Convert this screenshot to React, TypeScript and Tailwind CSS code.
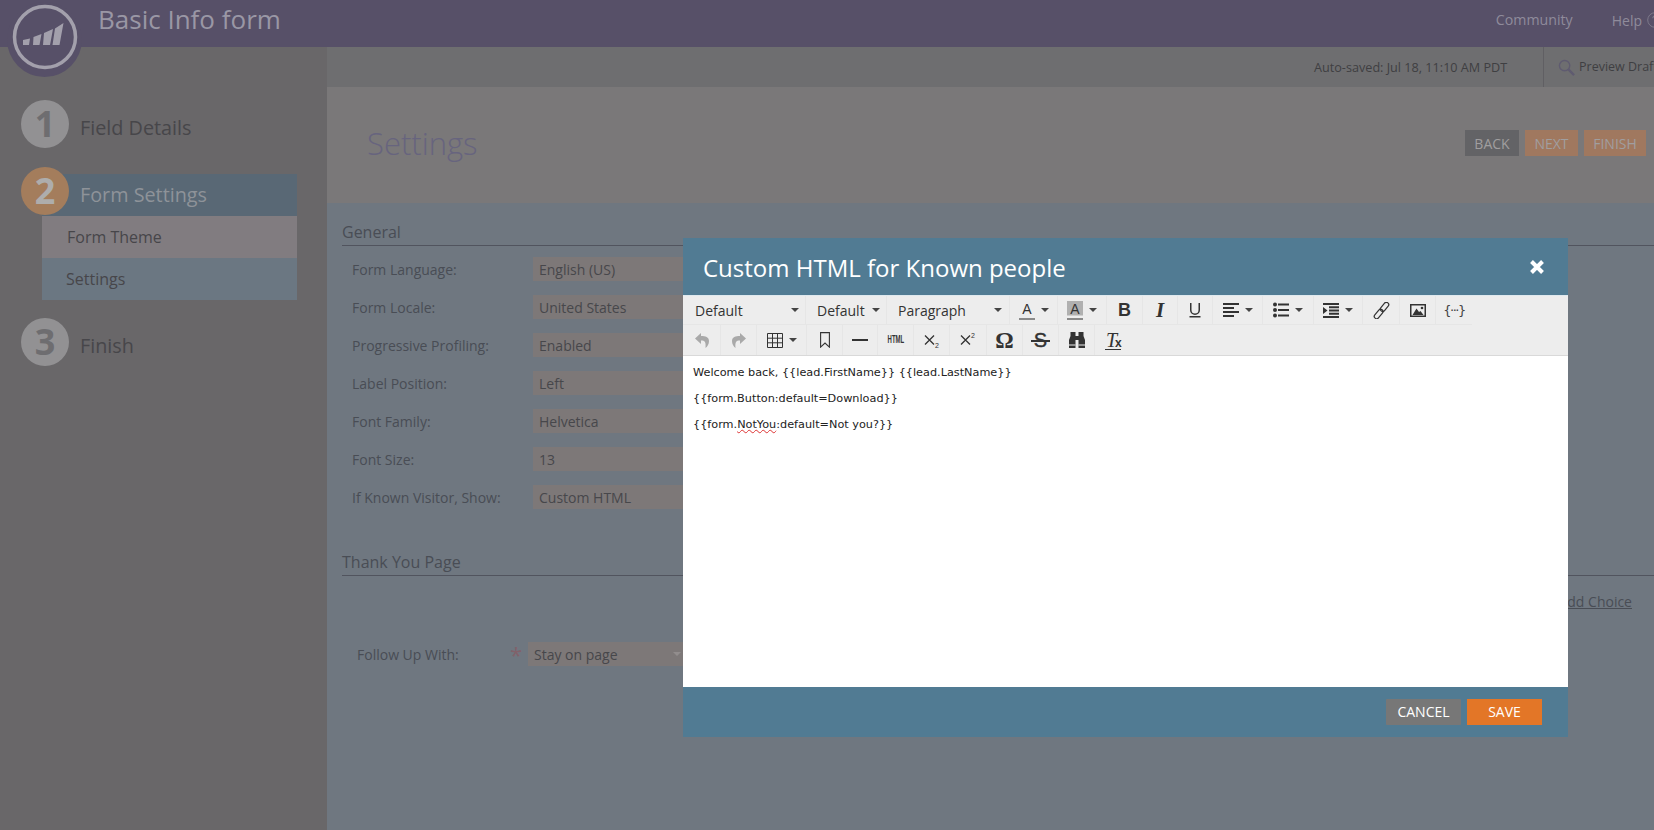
import React from "react";

const F = { fontFamily: '"Open Sans", sans-serif' };
const SANS = { fontFamily: '"Liberation Sans", sans-serif' };
const SERIF = { fontFamily: '"Liberation Serif", serif' };

function Caret({ c = "#444" }: { c?: string }) {
  return <span className="inline-block w-0 h-0 border-l-[4px] border-r-[4px] border-t-[4px] border-l-transparent border-r-transparent" style={{ borderTopColor: c }} />;
}

function Logo() {
  return (
    <svg width="66" height="66" viewBox="0 0 66 66" className="block">
      <circle cx="33" cy="33" r="30.5" fill="none" stroke="#a3a0ac" strokeWidth="3.500" />
      <path d="M11 36l7-1.500-1 6.500h-6z M21.500 33l8-3-2 11h-6.500z M32 29l9-4-3 16h-7z M43 24.500l8.500-5.500-4 22h-7z" fill="#a3a0ac" />
    </svg>
  );
}

function Step({ n, label, active }: { n: string; label: string; active?: boolean }) {
  return (
    <div className={`flex items-center h-[42px] relative ml-[42px] ${active ? "bg-[#596875] w-[255px]" : ""}`}>
      <div className={`absolute left-[-21px] top-[-7px] w-[48px] h-[48px] rounded-full flex items-center justify-center text-[36px] font-bold ${active ? "bg-[#a47d5c] text-[#aeadac]" : "bg-[#929193] text-[#6e6d70]"}`}>{n}</div>
      <span className={`ml-[38px] text-[19.800px] ${active ? "text-[#8e9399]" : "text-[#47464a]"}`}>{label}</span>
    </div>
  );
}

function Row({ label, value }: { label: string; value: string }) {
  return (
    <div className="flex items-center h-[24px] mb-[14px]">
      <span className="w-[191px] pl-[10px] text-[14px] text-[#494d55] shrink-0">{label}</span>
      <span className="flex-1 h-[24px] bg-[#7d7878] text-[14px] text-[#47474b] pl-[6px] leading-[25px]">{value}</span>
    </div>
  );
}

function Btn({ children, w, gap = 6 }: { children: React.ReactNode; w: number; gap?: number }) {
  return (
    <div className="flex items-center justify-center h-full shrink-0 text-[#333] border-r border-[#e6e6e6] last:border-r-0" style={{ width: w, gap }}>
      {children}
    </div>
  );
}

function Sel({ label, w, pad, gap }: { label: string; w: number; pad: number; gap: number }) {
  return (
    <div className="flex items-center h-full shrink-0 border-r border-[#e6e6e6] text-[14px] text-[#333]" style={{ width: w, paddingLeft: pad }}>
      <span style={{ width: gap }} className="shrink-0">{label}</span>
      <Caret />
    </div>
  );
}

function ColorA({ bg }: { bg?: boolean }) {
  return (
    <svg width="16" height="19" viewBox="0 0 16 19" className="block">
      {bg && <rect x="0" y="0" width="16" height="14.500" fill="#b0b0b0" />}
      <text x="8" y="13" textAnchor="middle" fontSize="14" fill="#333" style={SANS}>A</text>
      <rect x="0" y="17" width="16" height="2" fill="#8a8a8a" />
    </svg>
  );
}

function XScript({ up }: { up?: boolean }) {
  return (
    <svg width="16" height="16" viewBox="0 0 16 16" className="block" fill="none" stroke="#333">
      <path d="M1 3.500l9 9M10 3.500l-9 9" strokeWidth="1.300" />
      {up ? <text x="11" y="6" fontSize="7" fill="#333" stroke="none" style={SANS}>2</text> : <text x="11" y="16" fontSize="7" fill="#333" stroke="none" style={SANS}>2</text>}
    </svg>
  );
}

export default function App() {
  return (
    <div className="relative w-[1654px] h-[830px] overflow-hidden flex flex-col bg-[#6f7780]" style={F}>
      <header className="h-[47px] bg-[#575068] flex items-center shrink-0">
        <span className="ml-[98px] text-[26px] text-[#9a97a5] mt-[-9px]">Basic Info form</span>
        <span className="ml-auto text-[14.200px] text-[#8f8b9b] mt-[-7px]">Community</span>
        <span className="ml-[39px] text-[14px] text-[#8f8b9b] mt-[-7px]">Help</span>
        <svg width="16" height="16" viewBox="0 0 16 16" className="ml-[5px] mr-[-9px] shrink-0 mt-[-7px]" fill="none" stroke="#7c7889"><circle cx="8" cy="8" r="7.300" /><path d="M5.800 6.300a2.200 2.200 0 114 1.200c-.8.700-1.800 1-1.800 2.200M8 11v1.500" strokeWidth="1.200" /></svg>
      </header>
      <div className="flex-1 flex min-h-0">
        <aside className="w-[327px] shrink-0 bg-[#696769] relative pt-[60px]">
          <div className="absolute left-[7px] top-[-45px] w-[75px] h-[75px] rounded-full bg-[#575068] flex items-start justify-center pt-[2px]"><Logo /></div>
          <Step n="1" label="Field Details" />
          <div className="h-[25px]" />
          <Step n="2" label="Form Settings" active />
          <div className="ml-[42px] w-[255px] h-[42px] bg-[#817c80] text-[16px] text-[#47464a] flex items-center pl-[25px]">Form Theme</div>
          <div className="ml-[42px] w-[255px] h-[42px] bg-[#6b7782] text-[16px] text-[#47464a] flex items-center pl-[24px]">Settings</div>
          <div className="h-[25px]" />
          <Step n="3" label="Finish" />
        </aside>
        <main className="flex-1 min-w-0 flex flex-col">
          <div className="h-[40px] bg-[#6e6e70] flex items-center shrink-0 text-[12.650px] text-[#3f3f42] whitespace-nowrap">
            <span className="ml-[987px] w-[193px] shrink-0">Auto-saved: Jul 18, 11:10 AM PDT</span>
            <span className="ml-[36px] h-full border-l border-[#605f63]" />
            <svg width="17" height="17" viewBox="0 0 18 18" className="ml-[14px] mr-[4px] shrink-0" fill="none" stroke="#5f5b70" strokeWidth="1.500"><circle cx="7" cy="7" r="5.500" /><path d="M11 11l6 6" strokeWidth="2.500" /></svg>
            <span className="text-[12.500px]">Preview Draft</span>
          </div>
          <div className="h-[116px] bg-[#7a7879] flex items-center shrink-0">
            <span className="ml-[40px] text-[31px] text-[#67647e] font-light mt-[-3px]">Settings</span>
            <div className="ml-auto mr-[8px] mt-[-4px] flex gap-[6px] text-[14px] text-[#a09e9f]">
              <span className="w-[54px] h-[26px] bg-[#636366] flex items-center justify-center">BACK</span>
              <span className="w-[53px] h-[26px] bg-[#a0785f] flex items-center justify-center">NEXT</span>
              <span className="w-[62px] h-[26px] bg-[#a0785f] flex items-center justify-center">FINISH</span>
            </div>
          </div>
          <div className="flex-1 pl-[15px] pt-[18px] min-h-0">
            <h2 className="text-[16px] text-[#494d55] border-b border-[#51545e] h-[25px] leading-[22px] font-normal">General</h2>
            <div className="w-[346px] pt-[11px]">
              <Row label="Form Language:" value="English (US)" />
              <Row label="Form Locale:" value="United States" />
              <Row label="Progressive Profiling:" value="Enabled" />
              <Row label="Label Position:" value="Left" />
              <Row label="Font Family:" value="Helvetica" />
              <Row label="Font Size:" value="13" />
              <Row label="If Known Visitor, Show:" value="Custom HTML" />
            </div>
            <h2 className="mt-[42px] text-[16px] text-[#494d55] border-b border-[#51545e] h-[25px] leading-[22px] font-normal">Thank You Page</h2>
            <div className="flex justify-end h-[28px] mt-[15px] pr-[22px] text-[14px] text-[#494d55] underline">Add Choice</div>
            <div className="flex items-center mt-[23px] h-[24px] w-[346px]">
              <span className="w-[162px] pl-[15px] text-[14px] text-[#494d55] shrink-0">Follow Up With:</span>
              <span className="w-[24px] text-[22px] text-[#81616a] leading-[24px] pl-[6px] shrink-0">*</span>
              <span className="flex-1 flex items-center justify-between h-[24px] bg-[#7d7878] text-[14px] text-[#47474b] pl-[6px] pr-[7px]">Stay on page <Caret c="#928d8d" /></span>
            </div>
          </div>
        </main>
      </div>

      <div className="absolute left-[683px] top-[238px] w-[885px] h-[499px] bg-[#517b93] flex flex-col">
        <div className="h-[57px] flex items-center justify-between shrink-0">
          <span className="ml-[20px] mt-[2px] text-[24px] text-white">Custom HTML for Known people</span>
          <svg width="16" height="16" viewBox="0 0 16 16" className="mr-[23px]"><path d="M2.500 2.500l11 11M13.500 2.500l-11 11" stroke="#fff" strokeWidth="4" /></svg>
        </div>
        <div className="h-[61px] bg-[#ededed] border-b border-[#d9d9d9] border-t border-t-[#dfe9ee] shrink-0">
          <div className="flex h-[29px] w-[789px] border-b border-[#e6e6e6] pl-[1px]">
            <Sel label="Default" w={122} pad={11} gap={96} />
            <Sel label="Default" w={81} pad={11} gap={55} />
            <Sel label="Paragraph" w={123} pad={11} gap={96} />
            <Btn w={48}><ColorA /><Caret /></Btn>
            <Btn w={49}><ColorA bg /><Caret /></Btn>
            <Btn w={36}><span className="text-[18px] font-bold leading-none" style={SANS}>B</span></Btn>
            <Btn w={35}><span className="text-[21px] font-bold italic leading-none" style={SERIF}>I</span></Btn>
            <Btn w={35}>
              <svg width="12" height="16" viewBox="0 0 12 16" className="block" fill="#333"><path d="M1 1h1.500v7a3.500 3.500 0 007 0V1H11v7a5 5 0 01-10 0V1zM0.500 14h11v1.500H.5z" /></svg>
            </Btn>
            <Btn w={50}>
              <svg width="16" height="14" viewBox="0 0 16 14" className="block" fill="#333"><path d="M0 0h16v2H0zM0 4h11v2H0zM0 8h16v2H0zM0 12h11v2H0z" /></svg><Caret />
            </Btn>
            <Btn w={51}>
              <svg width="16" height="16" viewBox="0 0 16 16" className="block" fill="#333"><path d="M5 1.500h11v2H5zM5 7h11v2H5zM5 12.500h11v2H5z" /><circle cx="2" cy="2.500" r="2" /><circle cx="2" cy="8" r="2" /><circle cx="2" cy="13.500" r="2" /></svg><Caret />
            </Btn>
            <Btn w={49}>
              <svg width="16" height="15" viewBox="0 0 16 15" className="block" fill="#333"><path d="M0 0h16v2H0zM6 3.250h10v2H6zM6 6.500h10v2H6zM6 9.750h10v2H6zM0 13h16v2H0zM0 4l4.500 3.500L0 11z" /></svg><Caret />
            </Btn>
            <Btn w={37}>
              <svg width="17" height="17" viewBox="0 0 18 18" className="block" fill="none" stroke="#333" strokeWidth="1.300">
                <g transform="rotate(40 9 9)"><rect x="6.500" y="-1.500" width="5" height="11" rx="2.500" /><rect x="6.500" y="8" width="5" height="11.500" rx="2.500" /></g>
              </svg>
            </Btn>
            <Btn w={36}>
              <svg width="16" height="13" viewBox="0 0 16 13" className="block"><rect x=".75" y=".75" width="14.500" height="11.500" fill="none" stroke="#333" strokeWidth="1.500" /><path d="M2.500 11l4-6.500 2.500 3.500 1.500-1 3 4z" fill="#333" /><circle cx="12" cy="4" r="1.300" fill="#333" /></svg>
            </Btn>
            <Btn w={36}><span className="text-[13px] tracking-[-1.500px] leading-none text-[#444]" style={{ fontFamily: '"DejaVu Sans", sans-serif' }}>{"{···}"}</span></Btn>
          </div>
          <div className="flex h-[30px] w-[448px] pl-[1px]">
            <Btn w={37}>
              <svg width="14" height="15" viewBox="0 0 14 15" className="block"><path d="M6 0L0 5.500 6 11V7.500c4 0 5 1.500 4.500 7.500 2-1.500 3.500-4 3.500-7 0-4-3.500-5-8-5z" fill="#a9a9a9" /></svg>
            </Btn>
            <Btn w={36}>
              <svg width="14" height="15" viewBox="0 0 14 15" className="block"><path d="M8 0l6 5.500L8 11V7.500c-4 0-5 1.500-4.500 7.500C1.500 13.500 0 11 0 8c0-4 3.500-5 8-5z" fill="#a9a9a9" /></svg>
            </Btn>
            <Btn w={50}><svg width="16" height="15" viewBox="0 0 16 15" className="block" fill="none" stroke="#333"><path d="M.5.500h15v14H.5zM5.500.500v14M10.500.500v14M.5 5.200h15M.5 9.800h15" /></svg><Caret /></Btn>
            <Btn w={36}><svg width="10" height="16" viewBox="0 0 10 16" className="block" fill="none" stroke="#333" strokeWidth="1.100"><path d="M.6.600h8.800v14.500L5 11 .6 15.100z" /></svg></Btn>
            <Btn w={35}><div className="w-[16px] h-[2.500px] bg-[#333]" /></Btn>
            <Btn w={36}><span className="text-[10px] font-bold leading-none inline-block scale-x-[0.6] text-[#333]" style={SANS}>HTML</span></Btn>
            <Btn w={36}><XScript /></Btn>
            <Btn w={37}><XScript up /></Btn>
            <Btn w={36}><span className="text-[23px] font-bold leading-none" style={SERIF}>Ω</span></Btn>
            <Btn w={36}><span className="text-[20px] leading-none relative [-webkit-text-stroke:0.4px_#333]" style={SANS}>S<span className="absolute left-[-3px] right-[-3px] top-[10px] h-[1.500px] bg-[#333]" /></span></Btn>
            <Btn w={36}>
              <svg width="16" height="16" viewBox="0 0 16 16" className="block"><path d="M1.500 0h5v4h3V0h5v4l1.500 4v8H9.500V8h-3v8H0V8l1.500-4z" fill="#333" /><path d="M0 13h6.500M9.500 13H16" stroke="#ededed" /></svg>
            </Btn>
            <Btn w={36}>
              <span className="text-[20px] italic leading-none relative w-[16px] h-[18px] block text-[#333]" style={SERIF}>
                <span className="absolute left-[1px] top-[-1px]">T</span>
                <span className="absolute text-[12px] not-italic font-bold left-[10px] top-[6px]" style={SANS}>x</span>
                <span className="absolute left-0 right-0 bottom-[-1px] h-[1.500px] bg-[#333]" />
              </span>
            </Btn>
          </div>
        </div>
        <div className="flex-1 bg-white text-[11.250px] text-[#222] px-[10px] pt-[10px]" style={{ fontFamily: '"DejaVu Sans", sans-serif' }}>
          <p className="h-[26px] leading-[14px]">Welcome back, {"{{lead.FirstName}} {{lead.LastName}}"}</p>
          <p className="h-[26px] leading-[14px]">{"{{form.Button:default=Download}}"}</p>
          <p className="h-[26px] leading-[14px]">{"{{form."}<span className="underline decoration-wavy decoration-1 decoration-[#d33]">NotYou</span>{":default=Not you?}}"}</p>
        </div>
        <div className="h-[50px] shrink-0 flex justify-end items-start pt-[12px] pr-[26px] gap-[6px] text-[14px] text-white">
          <span className="w-[75px] h-[26px] bg-[#777] rounded-[1px] flex items-center justify-center pb-[1px]">CANCEL</span>
          <span className="w-[75px] h-[26px] bg-[#e37627] flex items-center justify-center pb-[1px]">SAVE</span>
        </div>
      </div>
    </div>
  );
}
